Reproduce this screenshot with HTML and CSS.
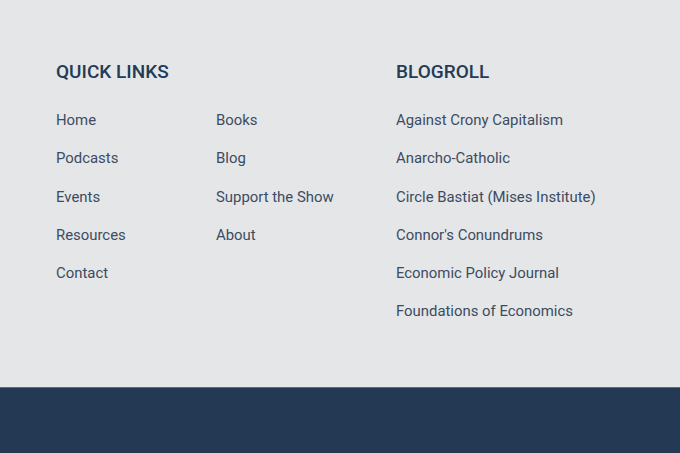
FILE: index.html
```html
<!DOCTYPE html>
<html>
<head>
<meta charset="utf-8">
<link rel="stylesheet" href="styles.css">
</head>
<body>
<footer class="footer">
  <div class="widgets">
    <section class="widget quick">
      <h2 class="title">QUICK LINKS</h2>
      <div class="cols">
        <ul class="links">
          <li><a href="#">Home</a></li>
          <li><a href="#">Podcasts</a></li>
          <li><a href="#">Events</a></li>
          <li><a href="#">Resources</a></li>
          <li><a href="#">Contact</a></li>
        </ul>
        <ul class="links">
          <li><a href="#">Books</a></li>
          <li><a href="#">Blog</a></li>
          <li><a href="#">Support the Show</a></li>
          <li><a href="#">About</a></li>
        </ul>
      </div>
    </section>
    <section class="widget blogroll">
      <h2 class="title">BLOGROLL</h2>
      <ul class="links">
        <li><a href="#">Against Crony Capitalism</a></li>
        <li><a href="#">Anarcho-Catholic</a></li>
        <li><a href="#">Circle Bastiat (Mises Institute)</a></li>
        <li><a href="#">Connor's Conundrums</a></li>
        <li><a href="#">Economic Policy Journal</a></li>
        <li><a href="#">Foundations of Economics</a></li>
      </ul>
    </section>
  </div>
  <div class="bottom"></div>
</footer>
</body>
</html>
```
FILE: styles.css
```css
html, body {
  margin: 0;
  padding: 0;
  background: #e5e6e8;
  font-family: Roboto, "Liberation Sans", sans-serif;
}
.footer {
  display: flex;
  flex-direction: column;
}
.widgets {
  display: flex;
  padding: 60px 56px 0;
  height: 387px;
  box-sizing: border-box;
}
.quick {
  width: 340px;
}
.title {
  margin: 0;
  font-size: 19px;
  font-weight: 500;
  line-height: 24px;
  color: #253a55;
}
.cols {
  display: flex;
}
.cols .links {
  width: 160px;
}
.links {
  list-style: none;
  margin: 25px 0 0;
  padding: 0;
  display: flex;
  flex-direction: column;
  gap: 16.25px;
}
.links li {
  line-height: 22px;
  font-size: 14.9px;
}
.links a {
  color: #3b4c61;
  text-decoration: none;
}
.bottom {
  height: 66px;
  box-sizing: border-box;
  background: #233954;
  border-top: 1px solid #5a6a80;
}
```
